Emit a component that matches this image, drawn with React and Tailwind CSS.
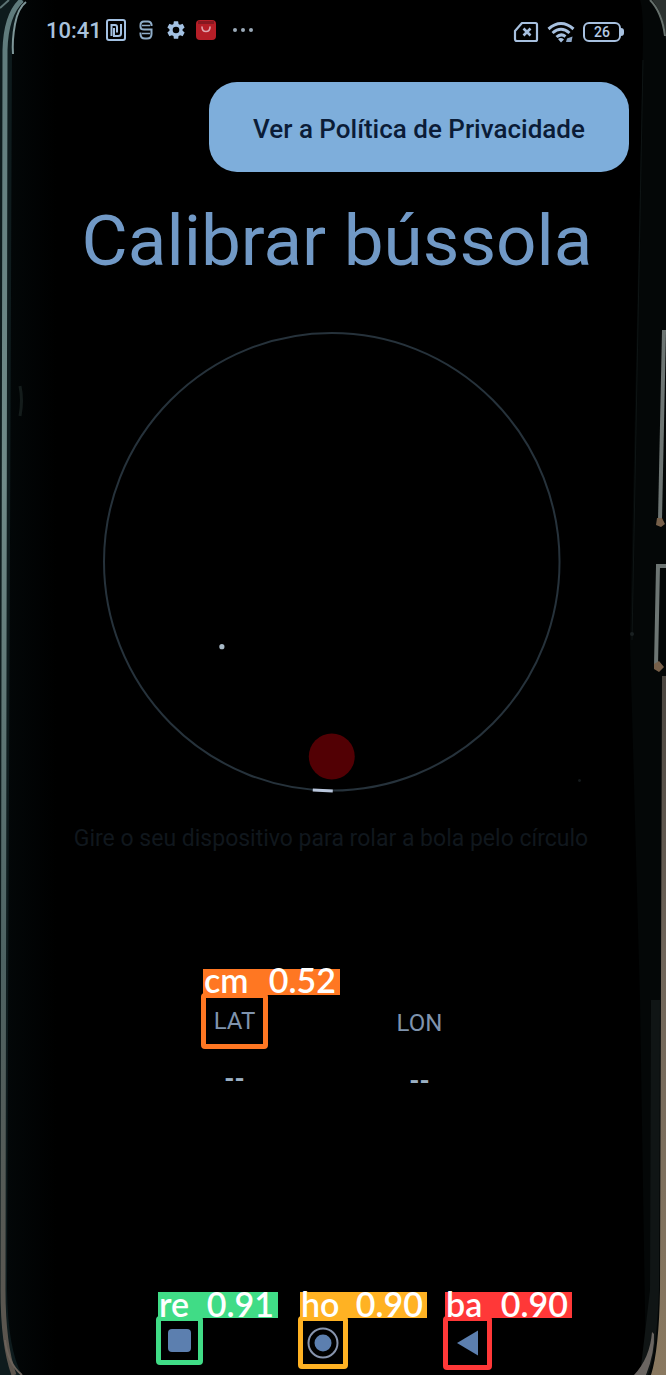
import React from "react";

function PhoneEdges() {
  return (
    <svg
      aria-hidden="true"
      className="pointer-events-none absolute inset-0 h-full w-full"
      viewBox="0 0 666 1375"
      preserveAspectRatio="none"
    >
      <defs>
        <linearGradient id="rail" x1="0" y1="0" x2="0" y2="1">
          <stop offset="0" stopColor="#5f7b7c" />
          <stop offset="0.35" stopColor="#6f8a88" />
          <stop offset="0.7" stopColor="#4d6262" />
          <stop offset="1" stopColor="#5c544c" />
        </linearGradient>
        <linearGradient id="leftGlass" x1="0" y1="0" x2="1" y2="0">
          <stop offset="0" stopColor="#030809" />
          <stop offset="1" stopColor="#000000" />
        </linearGradient>
        <linearGradient id="table" x1="0" y1="0" x2="0" y2="1">
          <stop offset="0" stopColor="#4b4640" />
          <stop offset="0.4" stopColor="#6f655a" />
          <stop offset="1" stopColor="#8a7960" />
        </linearGradient>
      </defs>
      <rect x="0" y="0" width="56" height="1375" fill="url(#leftGlass)" />
      <path d="M0 0H24Q12 16 12 50L7 1290Q8 1350 22 1375H0Z" fill="#0e1b1d" />
      <path d="M22 0Q6 14 5 50L3 1290Q3 1345 14 1375" fill="none" stroke="url(#rail)" strokeWidth="5" />
      <path d="M26 2Q18 8 15 24T13 54" fill="none" stroke="#7e9698" strokeWidth="2" />
      <path d="M0 8L9 0" stroke="#5c7374" strokeWidth="2" />
      <path d="M20 386Q23 400 20 416" fill="none" stroke="#141c1b" strokeWidth="3" />
      <path d="M5 1340Q8 1364 22 1375" fill="none" stroke="#6b625a" strokeWidth="2" />
      <path d="M640 0Q643 8 643 40L630 640L640 1000L646 1375H666V0Z" fill="#040707" />
      <path d="M643 60L632 640" stroke="#0f1515" strokeWidth="1" />
      <path d="M652 0Q664 14 666 40V0Z" fill="#2c3230" />
      <path d="M650 0Q662 12 665 36" fill="none" stroke="#66706c" strokeWidth="2" />
      <path d="M664 330L660 520" stroke="#6d7573" strokeWidth="4" />
      <path d="M666 566H658L656 666" fill="none" stroke="#6d7573" strokeWidth="4" />
      <path d="M657 518h5l3 6-4 3-5-2zM654 664l5-3 5 6-5 5-5-3z" fill="#77604a" />
      <path d="M651 1000H660L659 1290Q657 1350 648 1375H640L650 1290Z" fill="#101515" />
      <path d="M662 676L660 1290Q659 1350 651 1375H666V676Z" fill="url(#table)" />
      <path d="M652 1332Q650 1358 634 1375H646Q655 1352 654 1334Z" fill="#6a6561" />
      <circle cx="632" cy="634" r="2" fill="#1a2122" />
    </svg>
  );
}

function NfcIcon() {
  return (
    <svg className="h-[22px] w-[22px]" viewBox="0 0 22 22" fill="none" stroke="#a3c1e2" strokeWidth="2">
      <rect x="2" y="1" width="18" height="20" rx="2" />
      <path d="M6.500 17V6H10Q12 6 12 8V13.500" />
      <path d="M9 9V17H13Q16 17 16 14.500V5" />
    </svg>
  );
}

function SIcon() {
  return (
    <svg className="h-[20px] w-[16px]" viewBox="0 0 16 20" fill="none" stroke="#8fadc9" strokeWidth="2">
      <path d="M13.500 6V4.500Q13 1.500 10 1.500H6Q2.500 1.500 2.500 5V7Q2.500 9.500 6 9.500H13.500V14Q13.500 18.500 9 18.500H7Q2.500 18.500 2.500 14V12.500" />
      <path d="M4 5.500H12M4 13.500H12" strokeWidth="1.500" />
    </svg>
  );
}

function GearIcon() {
  return (
    <svg className="h-[22px] w-[22px]" viewBox="0 0 24 24" fill="#a3c1e2">
      <path d="M19.140 12.940c.040-.300.060-.610.060-.940s-.020-.640-.070-.940l2.030-1.580a.490.490 0 0 0 .120-.610l-1.920-3.320a.490.490 0 0 0-.590-.220l-2.390.960a7 7 0 0 0-1.620-.940l-.360-2.540a.480.480 0 0 0-.480-.410h-3.840a.470.470 0 0 0-.470.410l-.360 2.540a7.300 7.300 0 0 0-1.620.940l-2.390-.960a.470.470 0 0 0-.590.220L2.740 8.870a.470.470 0 0 0 .120.610l2.030 1.580a6 6 0 0 0 0 1.880l-2.030 1.580a.490.490 0 0 0-.120.610l1.920 3.320c.120.220.370.290.590.220l2.390-.960c.500.380 1.030.700 1.620.940l.360 2.540c.050.240.240.410.480.410h3.840c.240 0 .440-.170.470-.410l.360-2.540a7 7 0 0 0 1.620-.940l2.390.960c.220.080.470 0 .590-.220l1.920-3.320a.470.470 0 0 0-.120-.610zM12 15.600A3.600 3.600 0 1 1 12 8.400a3.600 3.600 0 0 1 0 7.200z" />
    </svg>
  );
}

function ShopIcon() {
  return (
    <svg className="h-[22px] w-[22px]" viewBox="0 0 22 22">
      <rect x="1" y="1" width="20" height="20" rx="4" fill="#b51e27" />
      <path d="M3 3.500H19" stroke="#861820" strokeWidth="3" />
      <path d="M7 8Q7 12.500 11 12.500T15 8" fill="none" stroke="#dfa5ae" strokeWidth="1.600" strokeLinecap="round" />
    </svg>
  );
}

function SimIcon() {
  return (
    <svg className="h-[22px] w-[26px]" viewBox="0 0 26 22" fill="none" stroke="#a7c0df" strokeWidth="2.200">
      <path d="M9 2H22.500Q24 2 24 3.500V18.500Q24 20 22.500 20H4Q2 20 2 18V10Z" strokeLinejoin="round" />
      <path d="M10.500 7.500L17.500 14.500M17.500 7.500L10.500 14.500" strokeWidth="2.600" />
    </svg>
  );
}

function WifiIcon() {
  return (
    <svg className="h-[22px] w-[28px]" viewBox="0 0 28 22" fill="none" stroke="#a7c0df" strokeWidth="3">
      <path d="M1.500 8Q14-3 26.500 8" />
      <path d="M5.500 12Q14 4.500 22.500 12" />
      <path d="M9.500 16Q14 12 18.500 15.500" />
      <path d="M11 18L14 21.500L17 18.500Q14 16 11 18Z" fill="#a7c0df" stroke="none" />
      <path d="M19 21L20 17.500L25.500 15.500L24.500 21Z" fill="#8ba5c5" stroke="none" />
    </svg>
  );
}

function BatteryIcon() {
  return (
    <div className="flex items-center">
      <div className="flex h-5 w-[38px] items-center justify-center rounded-md border-2 border-[#a7c0df] text-[14px] leading-none font-medium text-[#b4c9e3]">
        26
      </div>
      <div className="h-2 w-[3px] rounded-r-sm bg-[#a7c0df]" />
    </div>
  );
}

function StatusBar() {
  return (
    <header className="flex h-15 items-center justify-between pr-[42px] pl-[46px]">
      <div className="flex items-center">
        <time className="w-[59px] text-[22px] font-medium text-[#a9c2dc]">10:41</time>
        <div className="flex items-center gap-2">
          <NfcIcon />
          <div className="flex w-[22px] justify-center">
            <SIcon />
          </div>
          <GearIcon />
          <ShopIcon />
        </div>
        <div className="ml-4 flex gap-1">
          <span className="h-1 w-1 rounded-full bg-[#9aa9b8]" />
          <span className="h-1 w-1 rounded-full bg-[#9aa9b8]" />
          <span className="h-1 w-1 rounded-full bg-[#9aa9b8]" />
        </div>
      </div>
      <div className="flex items-center gap-2 pt-1">
        <SimIcon />
        <WifiIcon />
        <BatteryIcon />
      </div>
    </header>
  );
}

function Tag({ name, score, className }) {
  return (
    <div
      className={
        "absolute bottom-full left-[-3px] mb-[3px] flex h-[26px] items-center justify-between whitespace-nowrap pr-1 pb-[3px] pl-px font-[Lato,sans-serif] text-[34px] leading-none font-semibold text-white " +
        className
      }
    >
      <span>{name}</span>
      <span>{score}</span>
    </div>
  );
}

function CompassDial() {
  return (
    <svg className="mt-[47px] mr-[2px] w-[69%] overflow-visible" viewBox="0 0 460 462" role="img" aria-label="Bússola">
      <ellipse cx="230" cy="231" rx="228" ry="229" fill="none" stroke="#26323b" strokeWidth="2" />
      <circle cx="120" cy="316" r="2.600" fill="#a9bac8" />
      <circle cx="230" cy="426" r="23" fill="#520004" />
      <path d="M211 459.500L231 460.500" stroke="#b9c6dc" strokeWidth="3" />
      <circle cx="478" cy="450" r="1.500" fill="#14191b" />
    </svg>
  );
}

export default function App() {
  return (
    <div className="relative flex min-h-screen flex-col overflow-hidden bg-black font-[Roboto,sans-serif]">
      <PhoneEdges />
      <div className="relative flex flex-1 flex-col">
        <StatusBar />
        <div className="flex justify-end pt-[22px] pr-[37px]">
          <button
            type="button"
            className="h-[90px] w-[420px] rounded-[28px] bg-[#7eaedb] pt-1 text-[26px] font-medium text-[#0b1c37]"
          >
            Ver a Política de Privacidade
          </button>
        </div>
        <main className="flex flex-col items-center">
          <h1 className="mt-[27px] mb-px pl-2 text-[71px] leading-[84px] text-[#7199c6]">Calibrar bússola</h1>
          <CompassDial />
          <p className="mt-[30px] pr-1 text-[23px] leading-8 text-[#10171d]">
            Gire o seu dispositivo para rolar a bola pelo círculo
          </p>
          <dl className="mt-[138px] flex gap-[118px] pr-3">
            <div className="flex w-[67px] flex-col items-center text-[24px]">
              <div className="relative flex h-[56px] w-full items-center justify-center rounded-sm border-[5px] border-[#ff7722]">
                <Tag name="cm" score="0.52" className="w-[137px] bg-[#ff7722]" />
                <dt className="text-[#7f93ad]">LAT</dt>
              </div>
              <dd className="mt-[14px] text-[26px] leading-8 font-bold text-[#9bb0c4]">--</dd>
            </div>
            <div className="flex w-[67px] flex-col items-center text-[24px]">
              <dt className="flex h-[60px] items-center text-[#7f93ad]">LON</dt>
              <dd className="mt-3 text-[26px] leading-8 font-bold text-[#9bb0c4]">--</dd>
            </div>
          </dl>
        </main>
        <nav className="mt-auto flex items-start justify-center gap-[95px] pr-[18px] pb-[5px]">
          <button
            type="button"
            aria-label="Recentes"
            className="relative flex h-[49px] w-[47px] items-center justify-center rounded-sm border-[5px] border-[#40dc86]"
          >
            <Tag name="re" score="0.91" className="w-[120px] bg-[#40dc86]" />
            <span className="h-[23px] w-[23px] rounded bg-[#5c7faf]" />
          </button>
          <button
            type="button"
            aria-label="Início"
            className="relative flex h-[53px] w-[50px] items-center justify-center rounded-sm border-[5px] border-[#ffb223]"
          >
            <Tag name="ho" score="0.90" className="w-[127px] bg-[#ffb223]" />
            <svg className="h-8 w-8 shrink-0" viewBox="0 0 32 32">
              <circle cx="16" cy="16" r="14.500" fill="none" stroke="#8794ad" strokeWidth="2" />
              <circle cx="16" cy="16" r="8.500" fill="#5c7faf" />
            </svg>
          </button>
          <button
            type="button"
            aria-label="Voltar"
            className="relative flex h-[54px] w-[49px] items-center justify-center rounded-sm border-[5px] border-[#ff3838]"
          >
            <Tag name="ba" score="0.90" className="w-[127px] bg-[#ff3838]" />
            <svg className="h-[26px] w-[22px]" viewBox="0 0 22 26">
              <path d="M0 13L21 0.500V25.500Z" fill="#5c7faf" />
            </svg>
          </button>
        </nav>
      </div>
    </div>
  );
}
